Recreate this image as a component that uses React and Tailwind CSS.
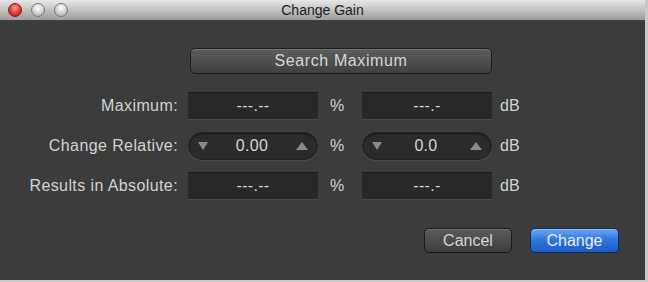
import React from 'react';

const font = { fontFamily: '"Liberation Sans", Arial, sans-serif' };

const Field = ({ value }) => (
  <div className="w-[130px] h-[28px] bg-[#282828] border-t border-t-[#1a1a1a] border-b border-b-[#4a4a4a] flex items-center justify-center text-[16px] tracking-[0.3px] text-[#d6d6d6]">
    {value}
  </div>
);

const Stepper = ({ value }) => (
  <div className="w-[130px] h-[28px] rounded-full bg-[#2b2b2b] border border-[#232323] shadow-[inset_0_1px_2px_rgba(0,0,0,0.5),0_1px_0_rgba(255,255,255,0.08)] flex items-center justify-between px-[8px] text-[16px] tracking-[0.3px] text-[#d6d6d6]">
    <svg width="12" height="10" viewBox="0 0 12 10"><polygon points="1,1 11,1 6,9" fill="#8a8a8a" /></svg>
    <span>{value}</span>
    <svg width="14" height="10" viewBox="0 0 14 10"><polygon points="1,9 13,9 7,1" fill="#8a8a8a" /></svg>
  </div>
);

const Row = ({ label, left, right }) => (
  <div className="flex items-center h-[28px]">
    <div className="w-[178px] text-right text-[16px] tracking-[0.4px] text-[#d2d2d2]">{label}</div>
    <div className="ml-[10px]">{left}</div>
    <div className="w-[44px] pl-[12px] text-[16px] text-[#d2d2d2]">%</div>
    {right}
    <div className="ml-[8px] text-[16px] text-[#d2d2d2]">dB</div>
  </div>
);

const Light = ({ red }) => (
  <div
    className={`w-[14px] h-[14px] rounded-full border ${
      red
        ? 'border-[#8a1a1a] bg-[radial-gradient(circle_at_50%_35%,#ffb0a8_0%,#f0403a_45%,#b01010_100%)]'
        : 'border-[#7a7a7a] bg-[radial-gradient(circle_at_50%_35%,#ffffff_0%,#d8d8d8_45%,#9a9a9a_100%)]'
    }`}
  />
);

export default function App() {
  return (
    <div className="w-[648px] h-[282px] bg-[#c9c9c9]" style={font}>
      <div className="w-[645px] h-[280px] bg-[#3c3c3c] flex flex-col overflow-hidden">
        {/* title bar */}
        <div className="h-[21px] shrink-0 bg-gradient-to-b from-[#e8e8e8] to-[#9c9c9c] border-b border-[#404040] relative flex items-center">
          <div className="flex items-center gap-[9px] pl-[8px]">
            <Light red />
            <Light />
            <Light />
          </div>
          <div className="absolute inset-0 flex items-center justify-center text-[14px] text-[#1e1e1e]">Change Gain</div>
        </div>

        {/* body */}
        <div className="flex flex-col pt-[27px]">
          <div className="pl-[190px]">
            <div className="w-[302px] h-[26px] rounded-[5px] border border-[#1c1c1c] bg-gradient-to-b from-[#5e5e5e] to-[#404040] shadow-[inset_0_1px_0_rgba(255,255,255,0.15)] flex items-center justify-center text-[16px] tracking-[0.6px] text-[#d6d6d6]">
              Search Maximum
            </div>
          </div>

          <div className="flex flex-col gap-[12px] mt-[18px]">
            <Row label="Maximum:" left={<Field value="---.--" />} right={<Field value="---.-" />} />
            <Row label="Change Relative:" left={<Stepper value="0.00" />} right={<Stepper value="0.0" />} />
            <Row label="Results in Absolute:" left={<Field value="---.--" />} right={<Field value="---.-" />} />
          </div>

          <div className="flex justify-end gap-[18px] pr-[26px] mt-[28px]">
            <div className="w-[88px] h-[25px] rounded-[5px] border border-[#1a1a1a] bg-gradient-to-b from-[#5a5a5a] to-[#3e3e3e] shadow-[inset_0_1px_0_rgba(255,255,255,0.15)] flex items-center justify-center text-[16px] text-[#d6d6d6]">
              Cancel
            </div>
            <div className="w-[89px] h-[25px] rounded-[5px] border border-[#0e2a5a] bg-gradient-to-b from-[#6aa6f0] via-[#2f74dc] to-[#1d5cc4] shadow-[inset_0_1px_0_rgba(255,255,255,0.3)] flex items-center justify-center text-[16px] text-[#e8eef8]">
              Change
            </div>
          </div>
        </div>
      </div>
    </div>
  );
}
